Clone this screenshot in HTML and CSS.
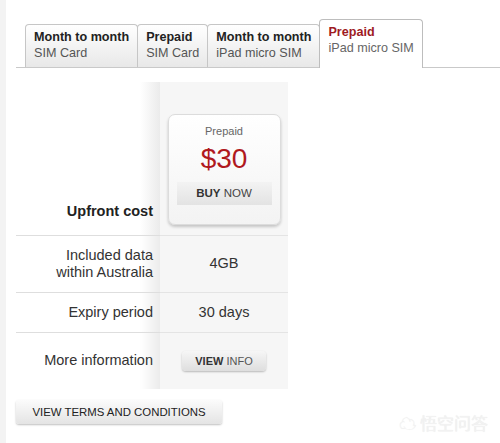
FILE: index.html
```html
<!DOCTYPE html>
<html lang="en">
<head>
    <meta charset="UTF-8">
    <meta name="viewport" content="width=device-width, initial-scale=1.0">
    <title>Mobile broadband plans</title>
    <link rel="stylesheet" href="styles.css">
</head>
<body>

    <div class="page">
        <!-- Plan type tabs -->
        <ul class="tabs">
            <li class="tab"><strong>Month to month</strong><span>SIM Card</span></li>
            <li class="tab"><strong>Prepaid</strong><span>SIM Card</span></li>
            <li class="tab"><strong>Month to month</strong><span>iPad micro SIM</span></li>
            <li class="tab tab-active"><strong>Prepaid</strong><span>iPad micro SIM</span></li>
        </ul>

        <!-- Plan comparison table -->
        <table class="plans">
            <tr class="row-price">
                <th class="label label-bottom">Upfront cost</th>
                <td class="value">
                    <div class="price-card">
                        <div class="price-type">Prepaid</div>
                        <div class="price">$30</div>
                        <div class="buy-now"><b>BUY</b> NOW</div>
                    </div>
                </td>
            </tr>
            <tr class="row-data">
                <td class="label">Included data<br>within Australia</td>
                <td class="value">4GB</td>
            </tr>
            <tr class="row-expiry">
                <td class="label">Expiry period</td>
                <td class="value">30 days</td>
            </tr>
            <tr class="row-info">
                <td class="label">More information</td>
                <td class="value"><button class="view-info"><b>VIEW</b> INFO</button></td>
            </tr>
        </table>

        <button class="terms">VIEW TERMS AND CONDITIONS</button>

        <div class="watermark">&#9729; 悟空问答</div>
    </div>

</body>
</html>
```

FILE: styles.css
```css
/* Page basics */
body {
    margin: 0;
    font-family: "Liberation Sans", Arial, sans-serif;
    color: #333;
    background-color: #fff;
}

.page {
    position: relative;
    min-height: 443px;
    box-sizing: border-box;
    border-left: 6px solid #f3f3f3;
    padding-left: 10px;
    overflow: hidden;
}

/* Tabs */
.tabs {
    list-style: none;
    margin: 19px 0 0;
    padding: 0 0 0 9px;
    display: flex;
    align-items: flex-end;
    border-bottom: 1px solid #c9c9c9;
}

.tab {
    display: flex;
    flex-direction: column;
    padding: 4px 8px 6px;
    border: 1px solid #c6c6c6;
    border-bottom: none;
    border-radius: 4px 4px 0 0;
    background: linear-gradient(#ffffff, #e8e8e8);
    font-size: 12.6px;
    line-height: 16px;
    cursor: pointer;
}

.tab + .tab {
    margin-left: -1px;
}

.tab strong {
    color: #222;
}

.tab span {
    color: #555;
}

.tab-active {
    background: #fff;
    border-color: #bdbdbd;
    padding: 4px 8px 11px;
    margin-bottom: -1px;
}

.tab-active strong {
    color: #9e1b1f;
}

.tab-active span {
    color: #666;
    line-height: 17px;
}

/* Comparison table */
.plans {
    margin-top: 14px;
    border-collapse: collapse;
    font-size: 14.5px;
    line-height: 17px;
}

.label {
    width: 137px;
    padding: 0 7px 0 0;
    text-align: right;
    font-weight: normal;
    color: #333;
    background: linear-gradient(to right, #fff calc(100% - 20px), #ebebeb);
    border-bottom: 1px solid #dedede;
}

.label-bottom {
    vertical-align: bottom;
    padding-bottom: 15px;
    font-weight: bold;
    color: #222;
}

.value {
    width: 128px;
    padding: 0;
    text-align: center;
    background-color: #f6f6f6;
    border-bottom: 1px solid #e4e4e4;
}

.row-price {
    height: 153px;
}

.row-price .value {
    vertical-align: bottom;
    padding-bottom: 10px;
}

.row-data {
    height: 57px;
}

.row-expiry {
    height: 40px;
}

.row-info {
    height: 57px;
}

.row-info .label,
.row-info .value {
    border-bottom: none;
}

/* Price card */
.price-card {
    width: 95px;
    margin: 0 auto;
    padding: 10px 8px 19px;
    border: 1px solid #dcdcdc;
    border-radius: 7px;
    background: linear-gradient(#ffffff, #f3f3f3);
    box-shadow: 0 2px 3px rgba(0, 0, 0, 0.2);
}

.price-type {
    font-size: 11px;
    line-height: 13px;
    color: #666;
}

.price {
    margin-top: 5px;
    font-size: 28px;
    line-height: 32px;
    color: #b0191e;
}

.buy-now {
    margin-top: 7px;
    height: 23px;
    line-height: 23px;
    font-size: 11.5px;
    color: #444;
    background: linear-gradient(#f3f3f3, #e3e3e3);
}

.buy-now b {
    color: #333;
}

/* Buttons */
.view-info {
    width: 84px;
    height: 20px;
    padding: 0;
    border: none;
    border-radius: 4px;
    font-family: inherit;
    font-size: 11px;
    color: #555;
    background: linear-gradient(#f6f6f6, #dedede);
    box-shadow: 0 1px 2px rgba(0, 0, 0, 0.25);
    cursor: pointer;
}

.view-info b {
    color: #333;
}

.terms {
    display: block;
    margin-top: 11px;
    width: 206px;
    height: 24px;
    padding: 0;
    border: none;
    border-radius: 3px;
    font-family: inherit;
    font-size: 11.4px;
    color: #222;
    background: linear-gradient(#fbfbfb, #e4e4e4);
    box-shadow: 0 1px 2px rgba(0, 0, 0, 0.25);
    cursor: pointer;
}

/* Faint watermark in the corner */
.watermark {
    position: absolute;
    right: 12px;
    bottom: 8px;
    font-family: "Noto Sans CJK SC", sans-serif;
    font-size: 17px;
    color: #f2f2f2;
    text-shadow: 0 0 1px #e6e6e6;
}
```
